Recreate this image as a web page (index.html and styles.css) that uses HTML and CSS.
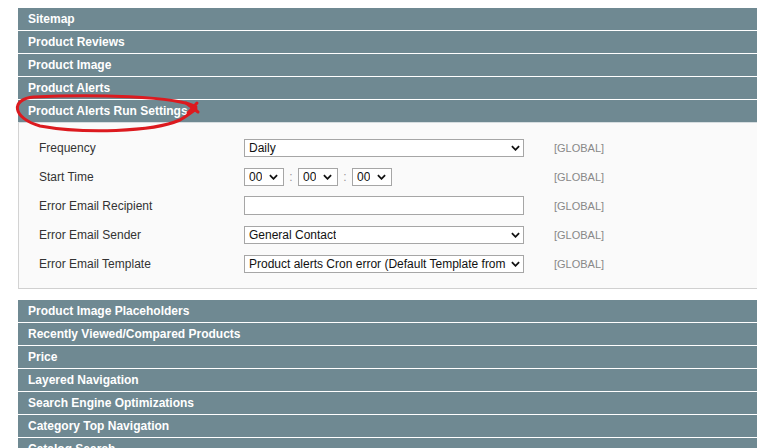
FILE: index.html
```html
<!DOCTYPE html>
<html lang="en">
<head>
    <meta charset="UTF-8">
    <meta name="viewport" content="width=device-width, initial-scale=1.0">
    <title>Catalog Configuration</title>
    <link rel="stylesheet" href="styles.css">
</head>
<body>
    <div class="config">
        <div class="head">Sitemap</div>
        <div class="head">Product Reviews</div>
        <div class="head">Product Image</div>
        <div class="head">Product Alerts</div>
        <div class="head">Product Alerts Run Settings</div>
        <div class="fieldset">
            <div class="row">
                <div class="label">Frequency</div>
                <div class="field">
                    <div class="select wide"><span>Daily</span><svg viewBox="0 0 10 6"><path d="M1 1l4 4 4-4"/></svg></div>
                </div>
                <div class="scope">[GLOBAL]</div>
            </div>
            <div class="row">
                <div class="label">Start Time</div>
                <div class="field time">
                    <div class="select small"><span>00</span><svg viewBox="0 0 10 6"><path d="M1 1l4 4 4-4"/></svg></div>
                    <span class="colon">:</span>
                    <div class="select small"><span>00</span><svg viewBox="0 0 10 6"><path d="M1 1l4 4 4-4"/></svg></div>
                    <span class="colon">:</span>
                    <div class="select small"><span>00</span><svg viewBox="0 0 10 6"><path d="M1 1l4 4 4-4"/></svg></div>
                </div>
                <div class="scope">[GLOBAL]</div>
            </div>
            <div class="row">
                <div class="label">Error Email Recipient</div>
                <div class="field">
                    <div class="input"></div>
                </div>
                <div class="scope">[GLOBAL]</div>
            </div>
            <div class="row">
                <div class="label">Error Email Sender</div>
                <div class="field">
                    <div class="select wide"><span>General Contact</span><svg viewBox="0 0 10 6"><path d="M1 1l4 4 4-4"/></svg></div>
                </div>
                <div class="scope">[GLOBAL]</div>
            </div>
            <div class="row">
                <div class="label">Error Email Template</div>
                <div class="field">
                    <div class="select wide"><span>Product alerts Cron error (Default Template from Locale)</span><svg viewBox="0 0 10 6"><path d="M1 1l4 4 4-4"/></svg></div>
                </div>
                <div class="scope">[GLOBAL]</div>
            </div>
        </div>
        <div class="head">Product Image Placeholders</div>
        <div class="head">Recently Viewed/Compared Products</div>
        <div class="head">Price</div>
        <div class="head">Layered Navigation</div>
        <div class="head">Search Engine Optimizations</div>
        <div class="head">Category Top Navigation</div>
        <div class="head">Catalog Search</div>
    </div>
    <svg class="mark" width="220" height="50" viewBox="0 0 220 50">
        <path d="M196 107 C178 96, 90 94, 34 97 C10 99, 12 118, 40 126 C84 134, 152 132, 180 120 C187 116, 192 112, 196 109" transform="translate(0 -90)"/>
        <path d="M186 13 L198 22 M197 13 L188 23"/>
    </svg>
</body>
</html>
```

FILE: styles.css
```css
body{
    margin: 0;
    padding: 8px 0 0 18px;
    font-family: "Liberation Sans", Arial, sans-serif;
    background: #fff;
    overflow: hidden;
}
.config{
    display: flex;
    flex-direction: column;
    gap: 1px;
}
.head{
    height: 22px;
    line-height: 22px;
    padding-left: 10px;
    background: #6f8992;
    color: #fff;
    font-size: 12px;
    font-weight: bold;
}
.fieldset{
    margin-top: -1px;
    margin-bottom: 10px;
    padding: 10px 0 10px 20px;
    background: #fafafa;
    border-top: 1px solid #d6dde0;
    border-left: 1px solid #d3d3d3;
    border-bottom: 1px solid #d0d0d0;
}
.row{
    display: grid;
    grid-template-columns: 175px 280px auto;
    column-gap: 30px;
    align-items: center;
    height: 29px;
}
.label{
    font-size: 12px;
    color: #333;
}
.field{
    display: flex;
    align-items: center;
}
.select{
    display: flex;
    align-items: center;
    justify-content: space-between;
    box-sizing: border-box;
    height: 18px;
    padding: 0 3px 0 4px;
    border: 1px solid #a6a6a6;
    background: #fff;
    font-size: 12px;
    color: #111;
    white-space: nowrap;
    overflow: hidden;
}
.select span{
    overflow: hidden;
}
.select svg{
    flex: none;
    width: 9px;
    height: 6px;
    margin-left: 2px;
    fill: none;
    stroke: #111;
    stroke-width: 2;
}
.wide{
    width: 280px;
}
.small{
    width: 40px;
    padding-right: 5px;
}
.colon{
    width: 14px;
    text-align: center;
    font-size: 12px;
    color: #999;
}
.input{
    box-sizing: border-box;
    width: 280px;
    height: 19px;
    border: 1px solid #a6a6a6;
    background: #fff;
}
.scope{
    font-size: 11px;
    color: #888;
}
.mark{
    position: absolute;
    left: 0;
    top: 90px;
    overflow: visible;
}
.mark path{
    fill: none;
    stroke: #dc1a1f;
    stroke-width: 3;
    stroke-linecap: round;
}
```
